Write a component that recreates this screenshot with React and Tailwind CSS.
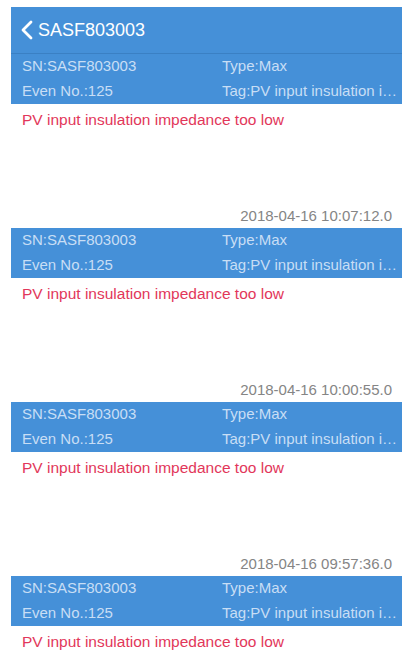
import React from "react";

const items = [
  null,
  "2018-04-16 10:07:12.0",
  "2018-04-16 10:00:55.0",
  "2018-04-16 09:57:36.0",
];

function Card() {
  return (
    <div className="h-[50px] bg-[#4590d8] text-[15px] text-[#c8def5] flex flex-col">
      <div className="h-[25px] flex items-center">
        <div className="w-[211px] shrink-0 pl-[11px] whitespace-nowrap">SN:SASF803003</div>
        <div className="flex-1 min-w-0 pr-[4px] whitespace-nowrap overflow-hidden">Type:Max</div>
      </div>
      <div className="h-[25px] flex items-center">
        <div className="w-[211px] shrink-0 pl-[11px] whitespace-nowrap">Even No.:125</div>
        <div className="flex-1 min-w-0 pr-[4px] whitespace-nowrap overflow-hidden">Tag:PV input insulation i…</div>
      </div>
    </div>
  );
}

export default function App() {
  return (
    <div className="min-h-screen bg-white pl-[11px] pr-[8px] pt-[7px] font-['Liberation_Sans',Arial,sans-serif]">
      <div className="h-[47px] bg-[#4590d8] border-b border-[#3a80c4] flex items-center pl-[9px] gap-[5px]">
        <svg width="13" height="20" viewBox="0 0 13 20" className="shrink-0">
          <polyline points="11,2 3,10 11,18" fill="none" stroke="#ffffff" strokeWidth="2.8" strokeLinecap="round" strokeLinejoin="round" />
        </svg>
        <span className="text-[18px] text-white">SASF803003</span>
      </div>
      {items.map((ts, i) => (
        <div key={i}>
          {ts && (
            <div className="mt-[68px] h-[24px] flex items-center justify-end pr-[10px] text-[15px] text-[#858585]">
              {ts}
            </div>
          )}
          <Card />
          <div className="h-[32px] flex items-center pl-[11px] text-[15.5px] text-[#e2375a] whitespace-nowrap">
            PV input insulation impedance too low
          </div>
        </div>
      ))}
    </div>
  );
}
